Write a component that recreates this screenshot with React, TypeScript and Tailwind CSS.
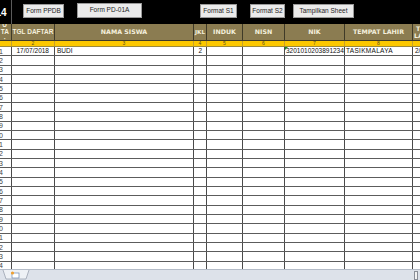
import React from "react";

const W = [12, 43, 139, 13, 36, 42, 60, 68, 27];

function Btn({ w, label, ml, h = "h-[14px]", mt = "mt-[4px]" }: { w: string; label: string; ml: string; h?: string; mt?: string }) {
  return (
    <div
      className={`${w} ${ml} ${h} ${mt} shrink-0 flex items-center justify-center bg-[#ebebeb] border border-[#9a9a9a] text-[6.5px] text-[#1e1e1e] leading-none`}
    >
      {label}
    </div>
  );
}

export default function App() {
  const rows = Array.from({ length: 25 }, (_, i) => i + 1);
  const hdrFont = { fontFamily: "'DejaVu Sans', Verdana, sans-serif" };
  return (
    <div
      className="w-[420px] h-[280px] overflow-hidden flex flex-col bg-white"
      style={{ fontFamily: "'Liberation Sans', Arial, sans-serif" }}
    >
      {/* top black bar */}
      <div className="h-[24px] shrink-0 bg-black flex">
        <div className="w-[12px] shrink-0 border-r border-[#5a5a5a] overflow-hidden flex items-center">
          <span className="text-white font-bold text-[10px] leading-none ml-[-5px] mt-[2px]">L4</span>
        </div>
        <Btn w="w-[41px]" ml="ml-[11px]" label="Form PPDB" />
        <Btn w="w-[65px]" ml="ml-[13px]" label="Form PD-01A" h="h-[15px]" mt="mt-[3px]" />
        <Btn w="w-[37px]" ml="ml-[58px]" label="Format S1" />
        <Btn w="w-[35px]" ml="ml-[13px]" label="Format S2" />
        <Btn w="w-[61px]" ml="ml-[8px]" label="Tampilkan Sheet" />
      </div>

      {/* grid area */}
      <div className="flex-1 overflow-hidden">
        {/* header */}
        <div className="flex h-[17px] bg-[#8b7c51] border-b border-[#3f3a28]">
          <div className="w-[12px] shrink-0 border-r border-[#3f3a28] overflow-hidden flex flex-col items-end pr-[2px] text-[#f4efdc] font-bold text-[6.5px] leading-[7px]">
            <span className="mt-[-3px] pr-[2px]">U</span>
            <span>TA</span>
            <span className="pr-[3px]">·</span>
          </div>
          <div className="w-[43px] shrink-0 border-r border-[#3f3a28] flex items-center justify-center text-[#f4efdc] font-bold text-[6.5px] whitespace-nowrap">
            TGL DAFTAR
          </div>
          {[
            ["NAMA SISWA", 139],
            ["JKL", 13],
            ["INDUK", 36],
            ["NISN", 42],
            ["NIK", 60],
            ["TEMPAT LAHIR", 68],
          ].map(([t, w]) => (
            <div
              key={t as string}
              style={{ width: w as number, ...hdrFont }}
              className={`shrink-0 border-r border-[#3f3a28] flex items-center justify-center text-[#f4efdc] font-bold ${t === "JKL" ? "text-[5.6px]" : "text-[6.3px]"} whitespace-nowrap`}
            >
              {t}
            </div>
          ))}
          <div
            style={hdrFont}
            className="w-[27px] shrink-0 flex flex-col items-start justify-center text-[#f4efdc] font-bold text-[6.3px] leading-[7px] whitespace-nowrap"
          >
            <span className="pl-[3px]">TGL</span>
            <span className="pl-[1px]">LAHIR</span>
          </div>
        </div>

        {/* yellow numbering row */}
        <div className="flex h-[6px] bg-[#fcc800] border-b border-[#9c8a3a]">
          {W.map((w, i) => (
            <div
              key={i}
              style={{ width: w }}
              className="shrink-0 border-r border-[#c9a22a] flex items-center justify-center text-[5px] leading-none text-[#5e5020]"
            >
              {i >= 1 && i <= 7 ? String(i + 1) : ""}
            </div>
          ))}
        </div>

        {/* data rows */}
        {rows.map((n) => (
          <div key={n} className="flex h-[9.33px] border-b border-[#5c5c5c]">
            {W.map((w, i) => (
              <div
                key={i}
                style={{ width: w }}
                className={`shrink-0 ${i < 8 ? "border-r border-[#4a4a4a]" : ""} relative overflow-hidden flex items-center text-[6.5px] leading-none text-[#111]`}
              >
                {i === 0 && (
                  <span className="text-[7px] text-[#444] ml-[-1px]">{String(n % 10)}</span>
                )}
                {n === 1 && i === 1 && <span className="ml-auto mr-[5px]">17/07/2018</span>}
                {n === 1 && i === 2 && <span className="ml-[2px]">BUDI</span>}
                {n === 1 && i === 3 && <span className="ml-auto mr-[4px]">2</span>}
                {n === 1 && i === 6 && (
                  <>
                    <span className="absolute left-0 top-0 w-0 h-0 border-t-[3px] border-r-[3px] border-t-[#1a8a2a] border-r-transparent" />
                    <span className="ml-[1px] whitespace-nowrap">32010102038912345678</span>
                  </>
                )}
                {n === 1 && i === 7 && <span className="ml-[1px] tracking-[0.3px]">TASIKMALAYA</span>}
                {n === 1 && i === 8 && <span className="ml-[2px] whitespace-nowrap">2/6/2010</span>}
              </div>
            ))}
          </div>
        ))}
      </div>

      {/* bottom sheet-tab bar */}
      <div className="h-[11px] shrink-0 bg-[#dde2ea] border-t border-[#b4bcc8] flex items-center">
        <svg width="30" height="10" viewBox="0 0 30 10" className="ml-[2px]">
          <path d="M1 0 L4 9 L24 9 L27 0" fill="#eef1f5" stroke="#9aa3b0" strokeWidth="0.8" />
          <rect x="10" y="3" width="7" height="5" fill="#fff" stroke="#6d88b0" strokeWidth="0.7" />
          <circle cx="10.5" cy="3" r="1.6" fill="#f0a030" />
        </svg>
        <div className="ml-auto mr-[2px] w-[4px] h-[9px] border border-[#8a8f98] bg-[#f2f2f2]" />
      </div>
    </div>
  );
}
